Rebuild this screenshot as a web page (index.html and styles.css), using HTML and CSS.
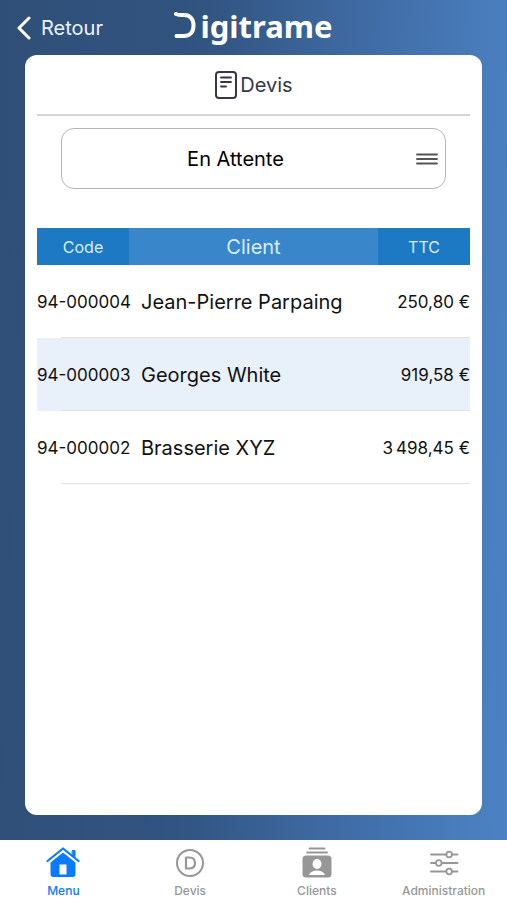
FILE: index.html
```html
<!DOCTYPE html>
<html lang="fr">
<head>
    <meta charset="UTF-8">
    <meta name="viewport" content="width=device-width, initial-scale=1.0">
    <title>Digitrame - Devis</title>
    <link rel="stylesheet" href="styles.css">
</head>
<body>
    <header class="topbar">
        <a class="back" href="#">
            <svg width="16" height="24" viewBox="0 0 16 24" fill="none" stroke="currentColor" stroke-width="3" stroke-linecap="round" stroke-linejoin="round">
                <path d="M13 2 L3 12 L13 22"/>
            </svg>
            Retour
        </a>
        <div class="logo" role="img" aria-label="Digitrame">
            <svg width="22" height="27" viewBox="0 0 22 27" fill="none" stroke="currentColor" stroke-width="4" stroke-linecap="round" stroke-linejoin="round">
                <path d="M2 2 C4 3.500 6 3 10 3 C16 3 19.500 7 19.500 13.500 C19.500 20 16 24 10 24 H2.500"/>
            </svg>
            <span>igitrame</span>
        </div>
    </header>

    <main class="card">
        <h1 class="title">
            <svg width="24" height="30" viewBox="0 0 24 30" fill="none" stroke="currentColor" stroke-linecap="round">
                <rect x="2" y="2" width="20" height="26" rx="3" stroke-width="2"/>
                <path d="M7 7.500 H17 M7 12 H17 M7 16.500 H12" stroke-width="1.800"/>
            </svg>
            Devis
        </h1>

        <div class="filter">
            <select class="filter-select" aria-label="Statut">
                <option>En Attente</option>
            </select>
            <svg class="filter-icon" width="22" height="12" viewBox="0 0 22 12" stroke="currentColor" stroke-width="1.800" stroke-linecap="round">
                <path d="M1 1.500 H21 M1 6 H21 M1 10.500 H21"/>
            </svg>
        </div>

        <table class="quotes">
            <thead>
                <tr>
                    <th class="code">Code</th>
                    <th class="client">Client</th>
                    <th class="total">TTC</th>
                </tr>
            </thead>
            <tbody>
                <tr>
                    <td class="code">94-000004</td>
                    <td class="client">Jean-Pierre Parpaing</td>
                    <td class="total">250,80 €</td>
                </tr>
                <tr>
                    <td class="code">94-000003</td>
                    <td class="client">Georges White</td>
                    <td class="total">919,58 €</td>
                </tr>
                <tr>
                    <td class="code">94-000002</td>
                    <td class="client">Brasserie XYZ</td>
                    <td class="total">3&#8239;498,45 €</td>
                </tr>
            </tbody>
        </table>
    </main>

    <nav class="tabbar">
        <a class="tab active" href="#">
            <svg width="34" height="32" viewBox="0 0 34 32" fill="none" stroke="currentColor" stroke-linecap="round" stroke-linejoin="round">
                <path d="M1.500 15 L17 2.500 L32.500 15" stroke-width="2.200"/>
                <path d="M26.500 4.500 H29 V11 L26.500 9 Z" fill="currentColor" stroke-width="1"/>
                <path d="M17 6.500 L29.500 16.500 V28 Q29.500 31 26.500 31 H7.500 Q4.500 31 4.500 28 V16.500 Z M13.500 18.500 V28.500 H20.500 V18.500 Z" fill="currentColor" fill-rule="evenodd" stroke="none"/>
            </svg>
            Menu
        </a>
        <a class="tab" href="#">
            <svg width="34" height="32" viewBox="0 0 34 32" fill="none" stroke="currentColor" stroke-linejoin="round">
                <circle cx="17" cy="17" r="13" stroke-width="2"/>
                <path d="M13 11.500 H16.500 C20 11.500 22 13.500 22 17 C22 20.500 20 22.500 16.500 22.500 H13 Z" stroke-width="2.200"/>
            </svg>
            Devis
        </a>
        <a class="tab" href="#">
            <svg width="34" height="32" viewBox="0 0 34 32" fill="none" stroke="currentColor" stroke-linecap="round">
                <path d="M9.500 2.500 H24.500 M7 6.500 H27" stroke-width="1.800"/>
                <rect x="2.500" y="9.500" width="29" height="22" rx="3.500" fill="currentColor" stroke="none"/>
                <ellipse cx="17" cy="18" rx="4.500" ry="5" fill="#fff" stroke="none"/>
                <path d="M9 29 C10 26 13 24.500 17 24.500 C21 24.500 24 26 25 29 Z" fill="#fff" stroke="none"/>
            </svg>
            Clients
        </a>
        <a class="tab" href="#">
            <svg width="34" height="32" viewBox="0 0 34 32" fill="none" stroke="currentColor" stroke-width="1.800" stroke-linecap="round">
                <path d="M4 8.500 H19 M25.500 8.500 H30.500 M4 17 H8.500 M15 17 H30.500 M4 25.500 H19 M25.500 25.500 H30.500"/>
                <circle cx="22.200" cy="8.500" r="2.800"/>
                <circle cx="11.800" cy="17" r="2.800"/>
                <circle cx="22.200" cy="25.500" r="2.800"/>
            </svg>
            Administration
        </a>
    </nav>
</body>
</html>
```

FILE: styles.css
```css
* {
    box-sizing: border-box;
}
body {
    font-family: Inter, sans-serif;
    display: flex;
    flex-direction: column;
    min-height: 100vh;
    margin: 0;
    background: linear-gradient(92deg, #2f4f77 0%, #315480 38%, #3e69a1 65%, #4a7fbf 94%, #4b82c4 100%);
    color: #111111;
}
.topbar {
    display: grid;
    grid-template-columns: 1fr auto 1fr;
    align-items: center;
    height: 55px;
    padding: 0 16px;
    color: #ffffff;
}
.back {
    display: flex;
    align-items: center;
    gap: 9px;
    font-size: 20px;
    color: #eaf3ff;
    text-decoration: none;
}
.back svg {
    color: #ffffff;
}
.logo {
    display: flex;
    align-items: center;
    gap: 4px;
    padding-bottom: 4px;
    font-family: "Noto Sans", sans-serif;
    font-size: 31px;
    font-weight: 700;
    line-height: 50px;
}
.card {
    flex: 1;
    margin: 0 25px 25px;
    padding: 0 12px;
    background: #ffffff;
    border-radius: 12px;
}
.title {
    display: flex;
    justify-content: center;
    align-items: center;
    gap: 2px;
    height: 61px;
    margin: 0;
    border-bottom: 2px solid #d4d4d4;
    font-size: 20px;
    font-weight: 400;
    color: #363845;
}
.filter {
    position: relative;
    margin: 12px 24px 39px;
}
.filter-select {
    display: block;
    width: 100%;
    height: 61px;
    padding: 0 36px 0 0;
    appearance: none;
    border: 1px solid #b5b5b5;
    border-radius: 13px;
    background: #ffffff;
    color: #000000;
    font-family: inherit;
    font-size: 20px;
    text-align: center;
    text-align-last: center;
}
.filter-icon {
    position: absolute;
    top: 25px;
    right: 8px;
    color: #555558;
    pointer-events: none;
}
.quotes {
    width: 100%;
    table-layout: fixed;
    border-collapse: collapse;
    white-space: nowrap;
}
.quotes th {
    height: 37px;
    padding: 0;
    background: #1c79c3;
    color: #d8edff;
    font-size: 16px;
    font-weight: 400;
}
.quotes th.code,
.quotes th.total {
    width: 92px;
}
.quotes th.client {
    background: #3987ca;
    font-size: 20px;
}
.quotes td {
    height: 73px;
    padding: 0;
    font-size: 17px;
}
.quotes td.client {
    padding-left: 12px;
    font-size: 20px;
}
.quotes td.total {
    text-align: right;
}
/* separator starts 24px in from the left edge */
.quotes tbody tr {
    background: linear-gradient(#e2e2e4, #e2e2e4) 24px 100% / 100% 1px no-repeat;
}
.quotes tbody tr:nth-child(even) {
    background-color: #e8f0fa;
}
.tabbar {
    display: grid;
    grid-template-columns: repeat(4, 1fr);
    height: 60px;
    background: #ffffff;
}
.tab {
    display: flex;
    flex-direction: column;
    align-items: center;
    gap: 5px;
    padding-top: 6px;
    color: #979797;
    font-size: 12px;
    font-weight: 500;
    line-height: 16px;
    text-decoration: none;
}
.tab.active {
    color: #0a7aff;
}
```
